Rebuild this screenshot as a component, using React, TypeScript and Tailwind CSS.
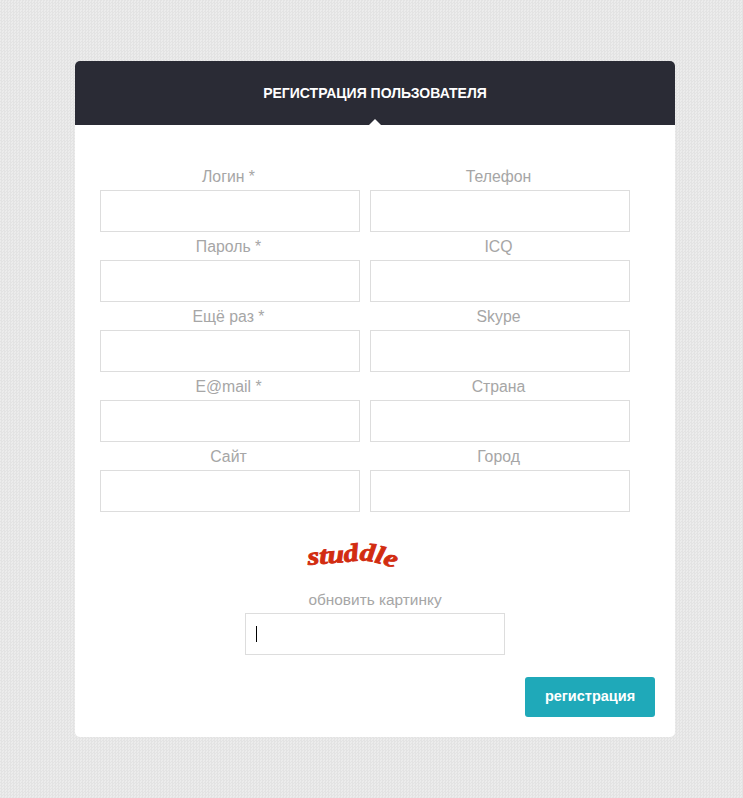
const leftFields = ["Логин *", "Пароль *", "Ещё раз *", "E@mail *", "Сайт"];
const rightFields = ["Телефон", "ICQ", "Skype", "Страна", "Город"];

function Field({ label }: { label: string }) {
  return (
    <label className="block w-[260px] text-center">
      <span className="block h-[28px] pt-[1px] pr-[3px] text-[15.8px] leading-[28px] text-[#a6a6a6]">{label}</span>
      <input type="text" className="block h-[42px] w-full border border-[#dddddd] bg-white px-2.5 outline-none" />
    </label>
  );
}

// distorted captcha word, real text bent along a curve
function Captcha() {
  return (
    <svg width="110" height="44" viewBox="0 0 110 44" className="block">
      <path id="captcha-curve" d="M8 29 C 26 27, 40 27, 54 25 C 68 23, 84 28, 104 36" fill="none" />
      <text
        fontFamily="'Liberation Serif', serif"
        fontWeight="bold"
        fontStyle="italic"
        fontSize="25"
        fill="#d22c10"
        stroke="#d22c10"
        strokeWidth="0.9"
      >
        <textPath href="#captcha-curve" textLength="88" lengthAdjust="spacingAndGlyphs">
          studdle
        </textPath>
      </text>
    </svg>
  );
}

export default function App() {
  return (
    <div className="min-h-[798px] bg-[#e7e7e7] bg-[image:repeating-conic-gradient(#e3e3e3_0%_25%,#ececec_0%_50%),repeating-linear-gradient(45deg,rgba(0,0,0,0.02)_0_1px,transparent_1px_5px)] bg-[size:3px_3px,auto] pt-[61px] font-['Liberation_Sans',Arial,sans-serif]">
      <div className="ml-[75px] w-[600px] rounded-[5px] bg-white pb-[20px]">
        <div className="relative flex h-[64px] items-center justify-center rounded-t-[5px] bg-[#2a2b35] pt-[1px]">
          <h1 className="text-[14px] font-bold text-white uppercase">Регистрация пользователя</h1>
          <div className="absolute bottom-0 left-1/2 h-0 w-0 -translate-x-1/2 border-x-[6px] border-b-[6px] border-x-transparent border-b-white" />
        </div>

        <div className="pt-[37px]">
          <div className="flex gap-[10px] pl-[25px]">
            <div>
              {leftFields.map((f) => (
                <Field key={f} label={f} />
              ))}
            </div>
            <div>
              {rightFields.map((f) => (
                <Field key={f} label={f} />
              ))}
            </div>
          </div>

          <div className="mt-[24px] pl-[225px]">
            <Captcha />
          </div>

          <div className="mt-[5px] flex flex-col items-center">
            <span className="h-[28px] pt-[1px] text-[15.4px] leading-[28px] text-[#a6a6a6]">обновить картинку</span>
            <div className="relative w-[260px]">
              <input type="text" className="block h-[42px] w-full border border-[#dddddd] bg-white px-2.5 outline-none" />
              <span className="absolute top-[13px] left-[11px] h-[16px] w-px bg-black" />
            </div>
          </div>

          <div className="mt-[22px] flex justify-end pr-[20px]">
            <button className="h-[40px] w-[130px] rounded-[3px] bg-[#1fa9b9] text-[14.5px] font-bold text-white">
              регистрация
            </button>
          </div>
        </div>
      </div>
    </div>
  );
}
